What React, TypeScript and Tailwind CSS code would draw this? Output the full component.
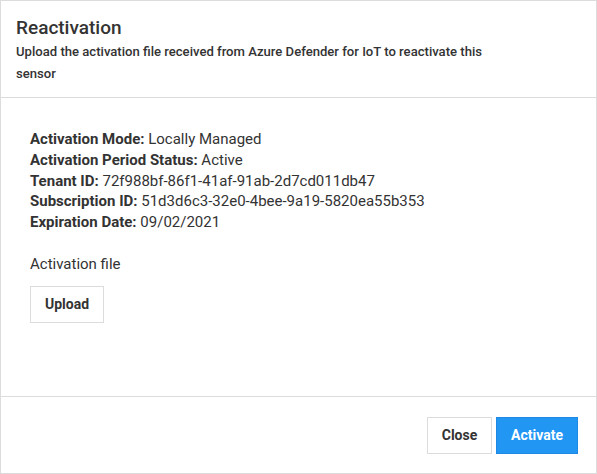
import React from "react";

const rows: [string, string][] = [
  ["Activation Mode:", "Locally Managed"],
  ["Activation Period Status:", "Active"],
  ["Tenant ID:", "72f988bf-86f1-41af-91ab-2d7cd011db47"],
  ["Subscription ID:", "51d3d6c3-32e0-4bee-9a19-5820ea55b353"],
  ["Expiration Date:", "09/02/2021"],
];

export default function App() {
  return (
    <div
      className="w-[597px] h-[474px] bg-white border border-[#dcdcdc] flex flex-col text-[#333333]"
      style={{ fontFamily: "Roboto, 'Liberation Sans', sans-serif" }}
    >
      <div className="pl-[15px] pr-[15px] pt-[15px] pb-[12px] border-b border-[#dcdcdc]">
        <div className="text-[19px] leading-[24px] font-medium text-[#333333]">Reactivation</div>
        <div className="max-w-[495px] text-[13.1px] leading-[22px] font-medium text-[#333333] mt-[1px]">
          Upload the activation file received from Azure Defender for IoT to reactivate this sensor
        </div>
      </div>
      <div className="flex-1 pl-[29px] pr-[30px] pt-[31px]">
        <div className="text-[15px] leading-[20.8px]">
          {rows.map(([k, v]) => (
            <div key={k}>
              <span className="font-bold">{k}</span> {v}
            </div>
          ))}
        </div>
        <div className="text-[15px] leading-[20.8px] mt-[21px]">Activation file</div>
        <button className="mt-[11px] h-[37px] w-[74px] border border-[#dcdcdc] bg-white text-[14px] font-bold text-[#333333]">
          Upload
        </button>
      </div>
      <div className="border-t border-[#dcdcdc] flex justify-end gap-[4px] pt-[20px] pb-[19px] pr-[18px]">
        <button className="h-[37px] w-[65px] border border-[#dcdcdc] bg-white text-[14px] font-bold text-[#333333]">
          Close
        </button>
        <button className="h-[37px] w-[82px] border border-[#1e88e5] bg-[#2196f3] text-[14px] font-bold text-white">
          Activate
        </button>
      </div>
    </div>
  );
}
